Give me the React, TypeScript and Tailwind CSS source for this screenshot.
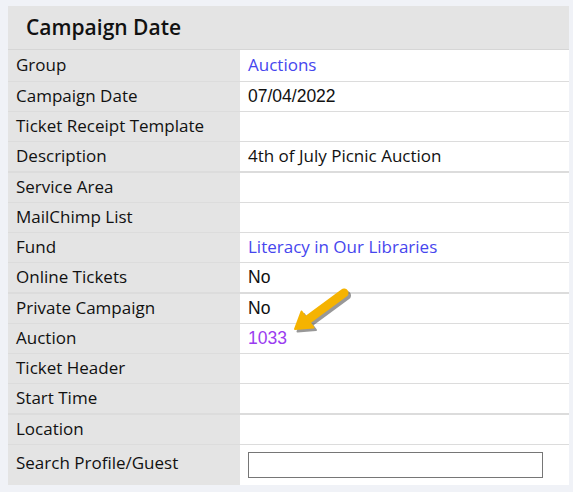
import { FC } from 'react';

type Row = {
    label: string;
    value?: string;
    kind?: 'link' | 'visited' | 'plain' | 'arial';
    thick?: boolean;
};

const rows: Row[] = [
    { label: 'Group', value: 'Auctions', kind: 'link' },
    { label: 'Campaign Date', value: '07/04/2022', kind: 'arial' },
    { label: 'Ticket Receipt Template' },
    { label: 'Description', value: '4th of July Picnic Auction', kind: 'plain' },
    { label: 'Service Area', thick: true },
    { label: 'MailChimp List' },
    { label: 'Fund', value: 'Literacy in Our Libraries', kind: 'link' },
    { label: 'Online Tickets', value: 'No', kind: 'arial' },
    { label: 'Private Campaign', value: 'No', kind: 'arial', thick: true },
    { label: 'Auction', value: '1033', kind: 'visited' },
    { label: 'Ticket Header' },
    { label: 'Start Time' },
    { label: 'Location', thick: true },
];

const valueClass = (kind?: Row['kind']) => {
    if (kind === 'link') return 'text-[#4646ee]';
    if (kind === 'visited') return "font-['Liberation_Sans',Arial,sans-serif] text-[17.5px] text-[#9a3cf0]";
    if (kind === 'arial') return "font-['Liberation_Sans',Arial,sans-serif] text-[17.5px] text-[#111]";
    return 'text-[#111]';
};

const rowClass = (idx: number, r: Row) => {
    if (idx === 0) return 'h-[31px]';
    if (r.thick) return 'h-[31px] border-t-2 border-[#dcdcdc]';
    return 'h-[30px] border-t border-[#dcdcdc]';
};

// yellow callout arrow pointing at the auction number
const Arrow: FC = () => (
    <svg
        className="pointer-events-none absolute left-[277px] top-[276px]"
        width="70"
        height="58"
        viewBox="0 0 70 58"
    >
        <g transform="translate(2.5 2.5)" opacity="0.5">
            <line x1="59" y1="11" x2="21" y2="39" stroke="#333" strokeWidth="9" strokeLinecap="round" />
            <polygon points="10,47 16.5,29.5 28.5,45.5" fill="#333" stroke="#333" strokeWidth="2" strokeLinejoin="round" />
        </g>
        <line x1="59" y1="11" x2="21" y2="39" stroke="#f5b301" strokeWidth="9" strokeLinecap="round" />
        <polygon points="10,47 16.5,29.5 28.5,45.5" fill="#f5b301" stroke="#f5b301" strokeWidth="2" strokeLinejoin="round" />
    </svg>
);

export default function App() {
    return (
        <div className="min-h-[492px] bg-[#f0f2f7] pt-[6px] pl-2 font-['Open_Sans','Noto_Sans',sans-serif] text-[17px] leading-[1.2] text-[#111]">
            <div className="relative w-[561px]">
                <div className="flex h-[44px] items-center border-b border-[#d6d6d6] bg-[#e4e4e4] pl-[18px]">
                    <h1 className="text-[21px] font-semibold leading-none text-[#111]">Campaign Date</h1>
                </div>
                {rows.map((r, idx) => (
                    <div key={idx} className={'flex ' + rowClass(idx, r)}>
                        <div className="flex w-[232px] items-center bg-[#e4e4e4] pb-px pl-2">{r.label}</div>
                        <div className={'flex flex-1 items-center bg-white pl-2 ' + valueClass(r.kind)}>
                            {r.value}
                        </div>
                    </div>
                ))}
                <div className="flex h-[41px] border-t border-[#dcdcdc]">
                    <div className="flex w-[232px] items-center bg-[#e4e4e4] pb-[3px] pl-2">Search Profile/Guest</div>
                    <div className="flex flex-1 items-center bg-white pl-2">
                        <input
                            type="text"
                            className="h-[26px] w-[295px] border border-[#767676] bg-white outline-none"
                        />
                    </div>
                </div>
                <Arrow />
            </div>
        </div>
    );
}
